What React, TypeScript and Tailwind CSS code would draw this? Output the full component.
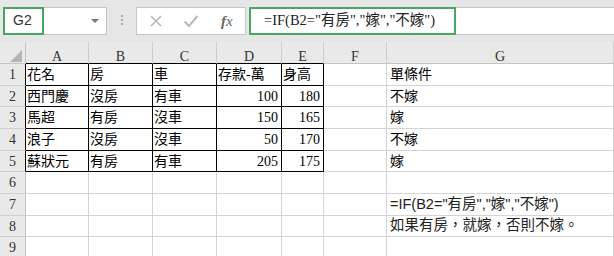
import React from 'react';

const cols = ['A', 'B', 'C', 'D', 'E', 'F', 'G'];

const rows: string[][] = [
  ['花名', '房', '車', '存款-萬', '身高', '', '單條件'],
  ['西門慶', '沒房', '有車', '100', '180', '', '不嫁'],
  ['馬超', '有房', '沒車', '150', '165', '', '嫁'],
  ['浪子', '沒房', '沒車', '50', '170', '', '不嫁'],
  ['蘇狀元', '有房', '有車', '205', '175', '', '嫁'],
  ['', '', '', '', '', '', ''],
  ['', '', '', '', '', '', '=IF(B2="有房","嫁","不嫁")'],
  ['', '', '', '', '', '', '如果有房，就嫁，否則不嫁。'],
  ['', '', '', '', '', '', ''],
];

const ming = { fontFamily: '"Liberation Serif", "Noto Sans CJK TC", serif' };
const sans = { fontFamily: '"Liberation Sans", "Noto Sans CJK TC", sans-serif' };

function Toolbar() {
  return (
    <div className="h-[42px] bg-[#e6e6e6] flex items-start pt-[7px]">
      <div className="ml-[3px] w-[104px] h-[28px] bg-white border border-[#c6c6c6] flex items-center">
        <div className="w-[41px] h-[28px] -ml-px -mt-px border-2 border-[#4aa564] flex items-center pl-[8px] text-[14px] text-[#333]" style={sans}>
          G2
        </div>
        <div className="flex-1" />
        <div className="mr-[7px] w-0 h-0 border-l-[4px] border-r-[4px] border-t-[4px] border-l-transparent border-r-transparent border-t-[#777]" />
      </div>
      <div className="ml-[14px] mt-[8px] flex flex-col gap-[2px]">
        <div className="w-[2px] h-[2px] bg-[#a8a8a8]" />
        <div className="w-[2px] h-[2px] bg-[#a8a8a8]" />
        <div className="w-[2px] h-[2px] bg-[#a8a8a8]" />
      </div>
      <div className="ml-[13px] w-[110px] h-[28px] bg-white border border-[#c6c6c6] flex items-center">
        <svg width="14" height="14" viewBox="0 0 14 14" className="ml-[12px]">
          <path d="M2 2 L12 12 M12 2 L2 12" stroke="#b8b8b8" strokeWidth="1.6" />
        </svg>
        <svg width="16" height="14" viewBox="0 0 16 14" className="ml-[20px]">
          <path d="M1.5 7.5 L6 12 L14.5 2" stroke="#b8b8b8" strokeWidth="2" fill="none" />
        </svg>
        <span className="ml-[22px] text-[15px] italic text-[#666]" style={{ fontFamily: '"Liberation Serif", serif' }}>
          <span className="font-bold">f</span>x
        </span>
      </div>
      <div className="ml-[3px] flex-1 h-[28px] bg-white border-y border-[#c6c6c6] flex">
        <div className="w-[207px] h-[28px] -mt-px border-2 border-[#4aa564] flex items-center pl-[13px] text-[14.5px] text-[#222] whitespace-nowrap" style={ming}>
          =IF(B2="有房","嫁","不嫁")
        </div>
      </div>
    </div>
  );
}

function Sheet() {
  return (
    <div className="grid grid-cols-[26px_63px_64px_64px_65px_42px_63px_1fr] grid-rows-[22px_22px_21px_22px_22px_21px_22px_22px_21px_22px]">
      <div className="bg-[#e9e9e9] border-r border-b border-[#c4c4c4]">
        <svg width="25" height="21" viewBox="0 0 25 21">
          <polygon points="22,8 22,20 10,20" fill="#b4b4b4" />
        </svg>
      </div>
      {cols.map((c, i) => (
        <div
          key={c}
          className={
            'bg-[#e9e9e9] border-r border-b border-r-[#cdcdcd] flex items-center justify-center pt-[7px] text-[14px] text-[#333] ' +
            (i < 5 ? 'border-b-black' : 'border-b-[#c4c4c4]')
          }
          style={ming}
        >
          {c}
        </div>
      ))}
      {rows.map((r, ri) => (
        <React.Fragment key={ri}>
          <div
            className={
              'bg-[#e9e9e9] border-r border-b border-b-[#d0d0d0] flex items-center justify-center text-[14px] text-[#333] ' +
              (ri < 5 ? 'border-r-black' : 'border-r-[#c4c4c4]')
            }
            style={ming}
          >
            {ri + 1}
          </div>
          {r.map((v, ci) => {
            const inTable = ri < 5 && ci < 5;
            const num = /^\d+$/.test(v);
            const lower = ri >= 6;
            return (
              <div
                key={ci}
                className={
                  'border-r border-b flex items-center whitespace-nowrap overflow-visible ' +
                  (inTable ? 'border-black ' : 'border-[#d4d4d4] ') +
                  (num ? 'justify-end pr-[3px] ' : ci === 6 ? 'pl-[3px] ' : 'pl-[1px] ') +
                  (lower ? 'text-[14.5px] text-[#222]' : 'text-[14px] text-black')
                }
                style={lower ? sans : ming}
              >
                {v}
              </div>
            );
          })}
        </React.Fragment>
      ))}
    </div>
  );
}

export default function App() {
  return (
    <div className="w-[614px] h-[256px] overflow-hidden bg-white">
      <Toolbar />
      <Sheet />
    </div>
  );
}
